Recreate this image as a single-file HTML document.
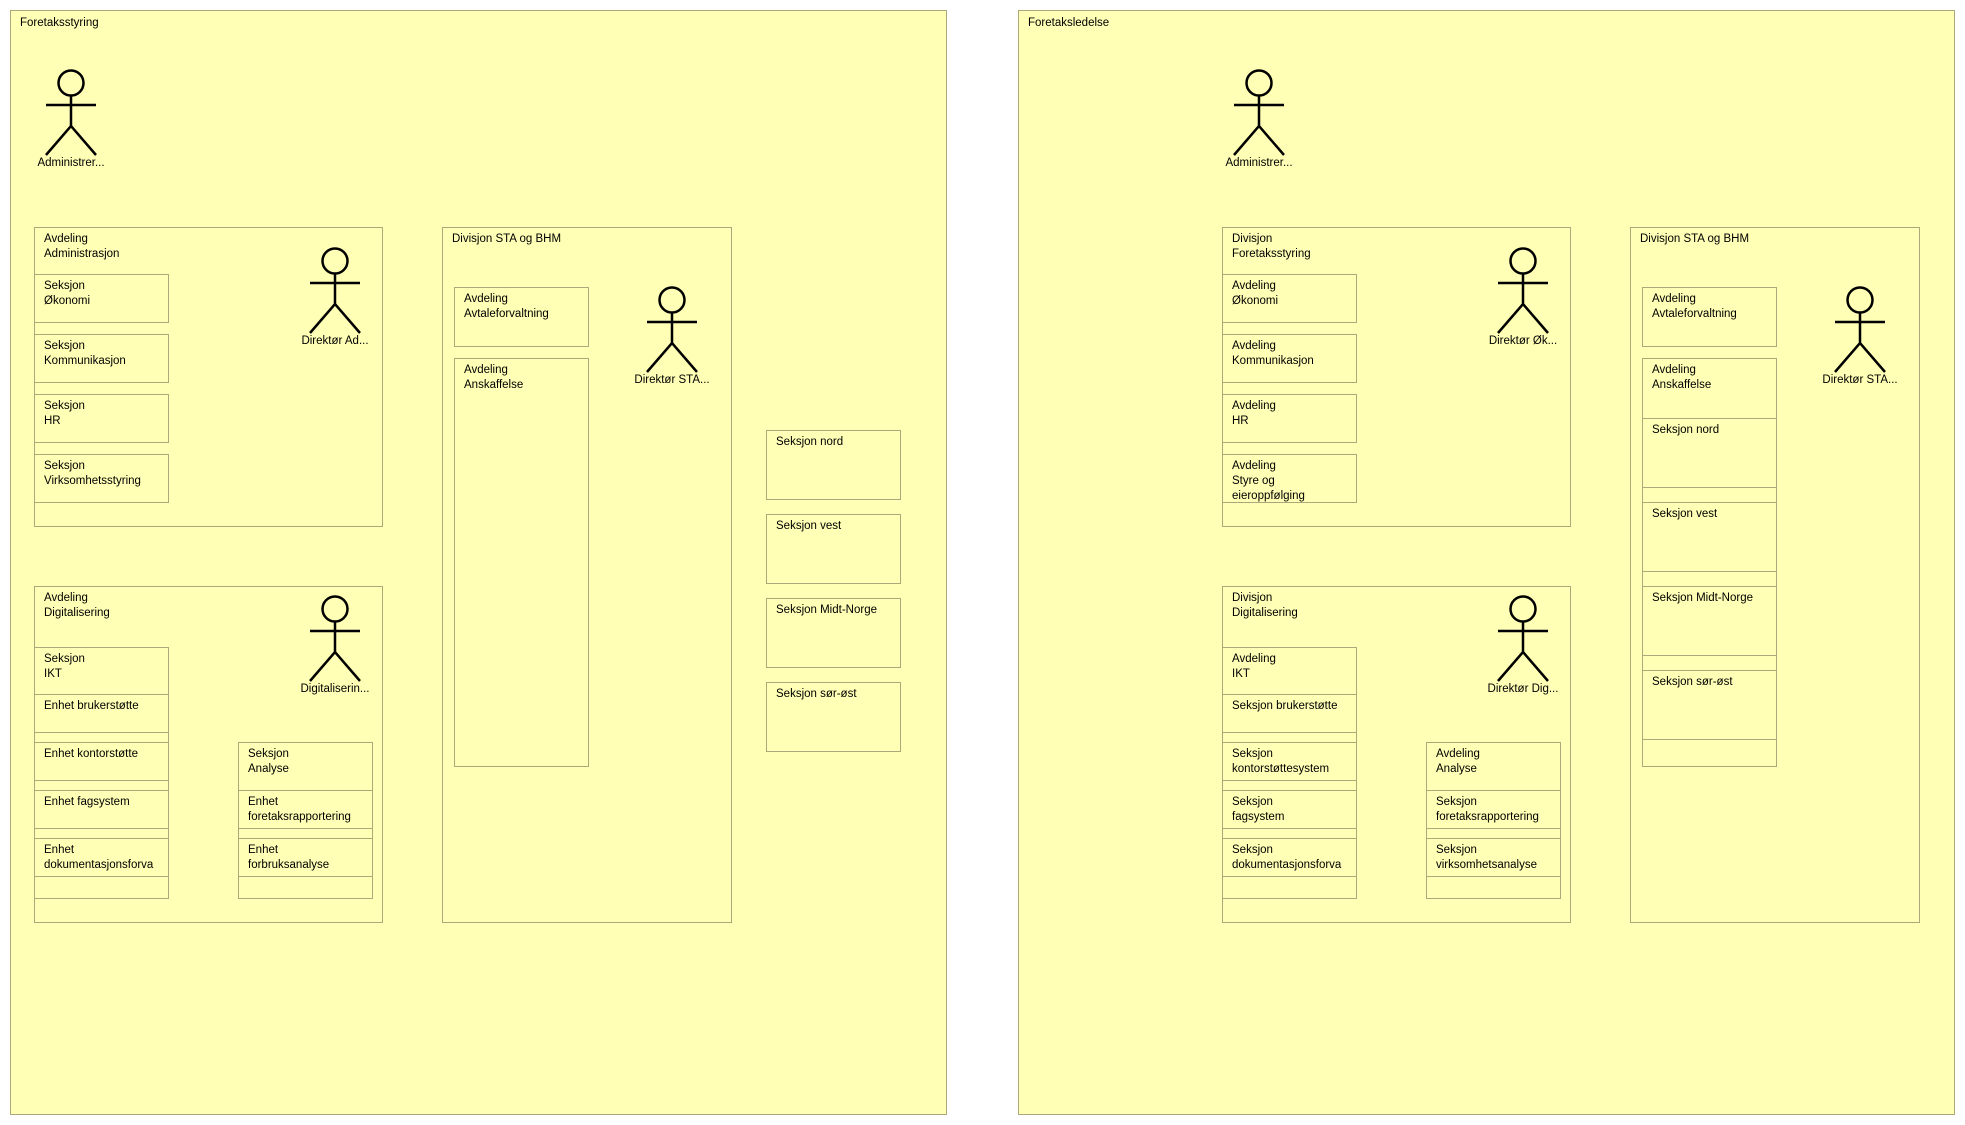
<!DOCTYPE html>
<html><head><meta charset="utf-8"><style>
body{margin:0;width:1965px;height:1125px;background:#fff;position:relative;overflow:hidden;font-family:"Liberation Sans",sans-serif;font-size:11.5px;color:#000}
.b{position:absolute;border:1px solid #aca87a;box-sizing:border-box;padding:4px 0 0 9px;line-height:15px;overflow:hidden;white-space:nowrap;background:#ffffb5}
.f{position:absolute;border:1px solid #aca87a;box-sizing:border-box;background:#ffffb5;padding:6px 0 0 9px}
.l{position:absolute;width:120px;text-align:center;line-height:14px;white-space:nowrap}
svg{position:absolute;left:0;top:0}
</style></head><body>
<div class="f" style="left:10px;top:10px;width:937px;height:1105px">Foretaksstyring</div>
<div class="f" style="left:1018px;top:10px;width:937px;height:1105px">Foretaksledelse</div>

<!-- LEFT -->
<div class="b" style="left:34px;top:227px;width:349px;height:300px">Avdeling<br>Administrasjon</div>
<div class="b" style="left:34px;top:274px;width:135px;height:49px">Seksjon<br>Økonomi</div>
<div class="b" style="left:34px;top:334px;width:135px;height:49px">Seksjon<br>Kommunikasjon</div>
<div class="b" style="left:34px;top:394px;width:135px;height:49px">Seksjon<br>HR</div>
<div class="b" style="left:34px;top:454px;width:135px;height:49px">Seksjon<br>Virksomhetsstyring</div>

<div class="b" style="left:34px;top:586px;width:349px;height:337px">Avdeling<br>Digitalisering</div>
<div class="b" style="left:34px;top:647px;width:135px;height:252px"></div>
<div class="b" style="left:34px;top:647px;width:135px;height:48px">Seksjon<br>IKT</div>
<div class="b" style="left:34px;top:694px;width:135px;height:39px">Enhet brukerstøtte</div>
<div class="b" style="left:34px;top:742px;width:135px;height:39px">Enhet kontorstøtte</div>
<div class="b" style="left:34px;top:790px;width:135px;height:39px">Enhet fagsystem</div>
<div class="b" style="left:34px;top:838px;width:135px;height:39px">Enhet<br>dokumentasjonsforva</div>
<div class="b" style="left:238px;top:742px;width:135px;height:157px"></div>
<div class="b" style="left:238px;top:742px;width:135px;height:49px">Seksjon<br>Analyse</div>
<div class="b" style="left:238px;top:790px;width:135px;height:39px">Enhet<br>foretaksrapportering</div>
<div class="b" style="left:238px;top:838px;width:135px;height:39px">Enhet<br>forbruksanalyse</div>

<div class="b" style="left:442px;top:227px;width:290px;height:696px">Divisjon STA og BHM</div>
<div class="b" style="left:454px;top:287px;width:135px;height:60px">Avdeling<br>Avtaleforvaltning</div>
<div class="b" style="left:454px;top:358px;width:135px;height:409px">Avdeling<br>Anskaffelse</div>

<div class="b" style="left:766px;top:430px;width:135px;height:70px">Seksjon nord</div>
<div class="b" style="left:766px;top:514px;width:135px;height:70px">Seksjon vest</div>
<div class="b" style="left:766px;top:598px;width:135px;height:70px">Seksjon Midt-Norge</div>
<div class="b" style="left:766px;top:682px;width:135px;height:70px">Seksjon sør-øst</div>

<!-- RIGHT -->
<div class="b" style="left:1222px;top:227px;width:349px;height:300px">Divisjon<br>Foretaksstyring</div>
<div class="b" style="left:1222px;top:274px;width:135px;height:49px">Avdeling<br>Økonomi</div>
<div class="b" style="left:1222px;top:334px;width:135px;height:49px">Avdeling<br>Kommunikasjon</div>
<div class="b" style="left:1222px;top:394px;width:135px;height:49px">Avdeling<br>HR</div>
<div class="b" style="left:1222px;top:454px;width:135px;height:49px">Avdeling<br>Styre og<br>eieroppfølging</div>

<div class="b" style="left:1222px;top:586px;width:349px;height:337px">Divisjon<br>Digitalisering</div>
<div class="b" style="left:1222px;top:647px;width:135px;height:252px"></div>
<div class="b" style="left:1222px;top:647px;width:135px;height:48px">Avdeling<br>IKT</div>
<div class="b" style="left:1222px;top:694px;width:135px;height:39px">Seksjon brukerstøtte</div>
<div class="b" style="left:1222px;top:742px;width:135px;height:39px">Seksjon<br>kontorstøttesystem</div>
<div class="b" style="left:1222px;top:790px;width:135px;height:39px">Seksjon<br>fagsystem</div>
<div class="b" style="left:1222px;top:838px;width:135px;height:39px">Seksjon<br>dokumentasjonsforva</div>
<div class="b" style="left:1426px;top:742px;width:135px;height:157px"></div>
<div class="b" style="left:1426px;top:742px;width:135px;height:49px">Avdeling<br>Analyse</div>
<div class="b" style="left:1426px;top:790px;width:135px;height:39px">Seksjon<br>foretaksrapportering</div>
<div class="b" style="left:1426px;top:838px;width:135px;height:39px">Seksjon<br>virksomhetsanalyse</div>

<div class="b" style="left:1630px;top:227px;width:290px;height:696px">Divisjon STA og BHM</div>
<div class="b" style="left:1642px;top:287px;width:135px;height:60px">Avdeling<br>Avtaleforvaltning</div>
<div class="b" style="left:1642px;top:358px;width:135px;height:409px">Avdeling<br>Anskaffelse</div>
<div class="b" style="left:1642px;top:418px;width:135px;height:70px">Seksjon nord</div>
<div class="b" style="left:1642px;top:502px;width:135px;height:70px">Seksjon vest</div>
<div class="b" style="left:1642px;top:586px;width:135px;height:70px">Seksjon Midt-Norge</div>
<div class="b" style="left:1642px;top:670px;width:135px;height:70px">Seksjon sør-øst</div>

<svg width="1965" height="1125" fill="none" stroke="#000" stroke-width="2.5">
<defs><g id="a"><circle cx="0" cy="0" r="12.5"/><path d="M0 12.5V43M-25 22H25M-25 72L0 43L25 72"/></g></defs>
<use href="#a" x="71" y="83"/>
<use href="#a" x="335" y="261"/>
<use href="#a" x="335" y="609"/>
<use href="#a" x="672" y="300"/>
<use href="#a" x="1259" y="83"/>
<use href="#a" x="1523" y="261"/>
<use href="#a" x="1523" y="609"/>
<use href="#a" x="1860" y="300"/>
</svg>
<div class="l" style="left:11px;top:156px">Administrer...</div>
<div class="l" style="left:275px;top:334px">Direktør Ad...</div>
<div class="l" style="left:275px;top:682px">Digitaliserin...</div>
<div class="l" style="left:612px;top:373px">Direktør STA...</div>
<div class="l" style="left:1199px;top:156px">Administrer...</div>
<div class="l" style="left:1463px;top:334px">Direktør Øk...</div>
<div class="l" style="left:1463px;top:682px">Direktør Dig...</div>
<div class="l" style="left:1800px;top:373px">Direktør STA...</div>
</body></html>
